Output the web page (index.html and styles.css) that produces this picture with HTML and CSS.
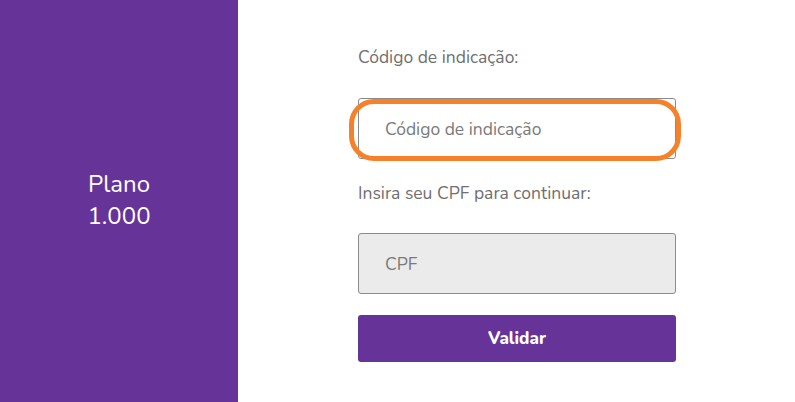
FILE: index.html
```html
<!DOCTYPE html>
<html lang="pt">
<head>
<meta charset="utf-8">
<link rel="stylesheet" href="styles.css">
</head>
<body>
<div class="page">
  <aside class="plan">
    <div class="plan-name">Plano<br>1.000</div>
  </aside>
  <main class="content">
    <form class="form">
      <label class="label">Código de indicação:</label>
      <div class="field-wrap">
        <input class="field" type="text" placeholder="Código de indicação">
        <span class="highlight"></span>
      </div>
      <label class="label label-cpf">Insira seu CPF para continuar:</label>
      <input class="field field-grey" type="text" placeholder="CPF">
      <button class="btn" type="button">Validar</button>
    </form>
  </main>
</div>
</body>
</html>
```

FILE: styles.css
```css
* { box-sizing: border-box; }
html, body { margin: 0; padding: 0; }
body {
  font-family: "Nunito", "Open Sans", "Noto Sans", sans-serif;
  background: #fff;
}
.page {
  display: flex;
  width: 795px;
  height: 402px;
}
.plan {
  width: 238px;
  flex: none;
  background: #663399;
  display: flex;
  align-items: center;
  justify-content: center;
}
.plan-name {
  color: #fff;
  font-size: 24px;
  line-height: 32px;
  text-align: center;
  padding-bottom: 2px;
}
.content {
  flex: 1;
  padding: 44px 0 0 120px;
}
.form {
  width: 318px;
  display: flex;
  flex-direction: column;
}
.label {
  color: #6f6f6f;
  font-size: 17.5px;
  line-height: 26px;
  margin-bottom: 28px;
}
.label-cpf {
  margin-top: 21px;
  margin-bottom: 27px;
}
.field-wrap {
  position: relative;
}
.field {
  display: block;
  width: 318px;
  height: 61px;
  border: 1px solid #8a8a8a;
  border-radius: 3px;
  padding: 0 26px;
  font-family: inherit;
  font-size: 17.5px;
  color: #555;
  background: #fff;
  outline: none;
}
.field::placeholder { color: #7a7a7a; }
.field-grey { background: #ebebeb; }
.highlight {
  position: absolute;
  top: 1px;
  bottom: -2px;
  left: -9px;
  right: -5px;
  border: 5px solid #f5822a;
  border-radius: 25px;
  pointer-events: none;
}
.btn {
  margin-top: 21px;
  height: 47px;
  border: none;
  border-radius: 3px;
  background: #663399;
  color: #fff;
  font-family: inherit;
  font-size: 17px;
  font-weight: 800;
  cursor: pointer;
}
```
